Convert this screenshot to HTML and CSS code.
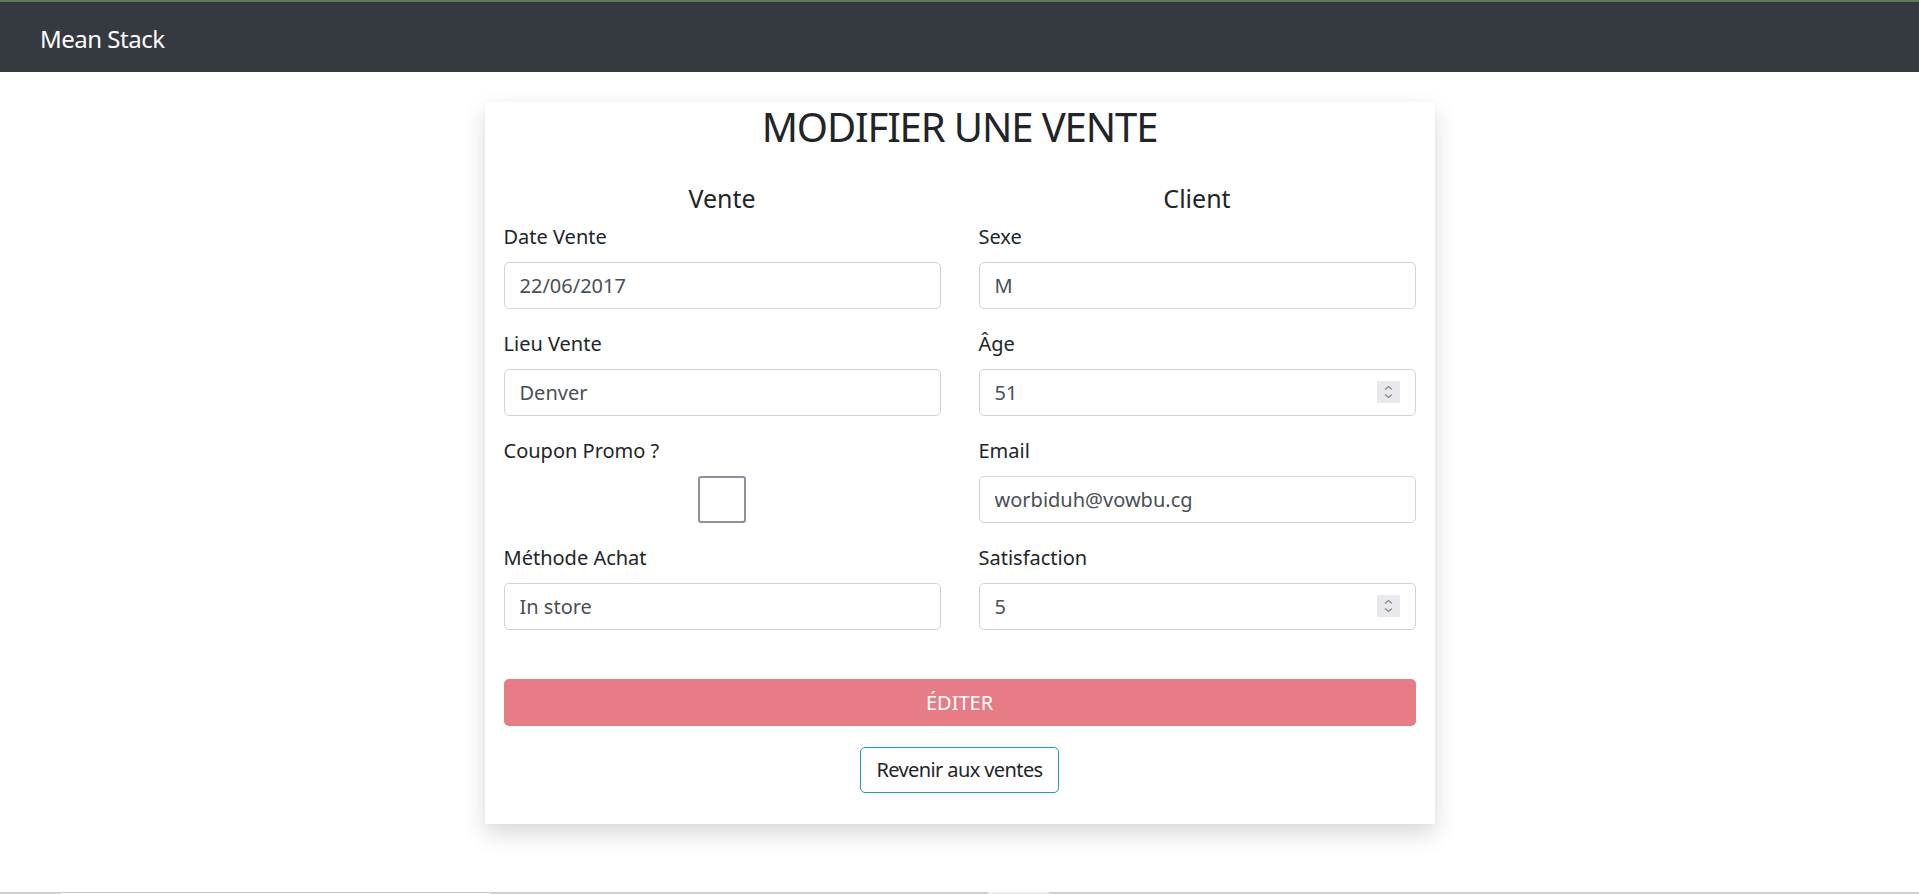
FILE: index.html
```html
<!DOCTYPE html>
<html lang="fr">
<head>
<meta charset="utf-8">
<title>Mean Stack</title>
<link rel="stylesheet" href="styles.css">
</head>
<body>
<div class="page">
  <nav class="navbar">
    <a class="brand" href="#">Mean Stack</a>
  </nav>
  <main class="main">
    <div class="card">
      <h1 class="title">MODIFIER UNE VENTE</h1>
      <div class="cols">
        <div class="col">
          <h5 class="col-title">Vente</h5>
          <div class="group">
            <label class="label">Date Vente</label>
            <input class="control" type="text" value="22/06/2017">
          </div>
          <div class="group">
            <label class="label">Lieu Vente</label>
            <input class="control" type="text" value="Denver">
          </div>
          <div class="group">
            <label class="label">Coupon Promo ?</label>
            <div class="check-wrap"><input class="check" type="checkbox"></div>
          </div>
          <div class="group">
            <label class="label">Méthode Achat</label>
            <input class="control" type="text" value="In store">
          </div>
        </div>
        <div class="col">
          <h5 class="col-title">Client</h5>
          <div class="group">
            <label class="label">Sexe</label>
            <input class="control" type="text" value="M">
          </div>
          <div class="group">
            <label class="label">Âge</label>
            <div class="num">
              <input class="control" type="text" value="51">
              <span class="spin"><svg width="23" height="22" viewBox="0 0 23 22"><path d="M8 8.5 L11.5 5.5 L15 8.5" fill="none" stroke="#8a8a92" stroke-width="1.3"/><path d="M8 13.5 L11.5 16.5 L15 13.5" fill="none" stroke="#8a8a92" stroke-width="1.3"/></svg></span>
            </div>
          </div>
          <div class="group">
            <label class="label">Email</label>
            <input class="control" type="text" value="worbiduh@vowbu.cg">
          </div>
          <div class="group">
            <label class="label">Satisfaction</label>
            <div class="num">
              <input class="control" type="text" value="5">
              <span class="spin"><svg width="23" height="22" viewBox="0 0 23 22"><path d="M8 8.5 L11.5 5.5 L15 8.5" fill="none" stroke="#8a8a92" stroke-width="1.3"/><path d="M8 13.5 L11.5 16.5 L15 13.5" fill="none" stroke="#8a8a92" stroke-width="1.3"/></svg></span>
            </div>
          </div>
        </div>
      </div>
      <button class="btn-edit" type="button">ÉDITER</button>
      <div class="back-row"><a class="btn-back" href="#">Revenir aux ventes</a></div>
    </div>
  </main>
  <div class="bottom-strip"><span class="seg-a"></span><span class="seg-b"></span><span class="seg-c"></span><span class="seg-d"></span></div>
</div>
</body>
</html>
```
FILE: styles.css
```css
html, body {
  margin: 0;
  padding: 0;
}
body {
  font-family: "Noto Sans", "Open Sans", sans-serif;
  font-size: 20px;
  line-height: 1.5;
  color: #212529;
  background: #fff;
}
.page {
  min-height: 100vh;
  display: flex;
  flex-direction: column;
}
.navbar {
  height: 70px;
  border-top: 2px solid #5d7b5e;
  background: #343a40;
  display: flex;
  align-items: center;
  padding: 0 40px;
}
.brand {
  color: #fff;
  text-decoration: none;
  font-size: 24px;
  letter-spacing: -0.5px;
  line-height: 37px;
  margin-top: 2px;
}
.main {
  padding-top: 30px;
}
.card {
  width: 950px;
  box-sizing: border-box;
  margin: 0 auto;
  padding: 0 19px 31px;
  background: #fff;
  box-shadow: 0 10px 22px rgba(0, 0, 0, 0.15), 0 0 4px rgba(0, 0, 0, 0.03);
}
.title {
  margin: 0 0 32px;
  padding-top: 1px;
  font-size: 40px;
  letter-spacing: -1.1px;
  line-height: 48px;
  font-weight: 400;
  text-align: center;
}
.cols {
  display: grid;
  grid-template-columns: 1fr 1fr;
  column-gap: 38px;
}
.col-title {
  margin: 0 0 9px;
  font-size: 25px;
  line-height: 30px;
  font-weight: 400;
  text-align: center;
}
.group {
  margin-bottom: 20px;
  display: flex;
  flex-direction: column;
}
.label {
  display: block;
  line-height: 30px;
  margin-bottom: 10px;
}
.control {
  display: block;
  width: 100%;
  box-sizing: border-box;
  height: 47px;
  padding: 0 15px;
  font-family: inherit;
  font-size: 20px;
  color: #495057;
  background: #fff;
  border: 1px solid #ced4da;
  border-radius: 5px;
  outline: none;
}
.check-wrap {
  display: flex;
  justify-content: center;
  height: 47px;
}
.check {
  appearance: none;
  -webkit-appearance: none;
  margin: 0;
  width: 48px;
  height: 47px;
  box-sizing: border-box;
  border: 2px solid #8f8f9d;
  border-radius: 3px;
  background: #fff;
}
.num {
  position: relative;
}
.spin {
  position: absolute;
  right: 16px;
  top: 12px;
  width: 23px;
  height: 22px;
  background: #e9e9ed;
  display: block;
}
.spin svg {
  display: block;
}
.btn-edit {
  display: block;
  width: 100%;
  height: 47px;
  margin-top: 29px;
  border: none;
  border-radius: 5px;
  background: #e77c86;
  color: #fff;
  font-family: inherit;
  font-size: 20px;
  padding: 0;
}
.back-row {
  display: flex;
  justify-content: center;
  margin-top: 21px;
}
.btn-back {
  display: flex;
  align-items: center;
  height: 46px;
  box-sizing: border-box;
  padding: 0 15px;
  border: 1px solid #17a2b8;
  border-radius: 5px;
  color: #212529;
  text-decoration: none;
  font-size: 20px;
  letter-spacing: -0.6px;
}
.bottom-strip {
  margin-top: auto;
  height: 2px;
  display: flex;
  background: #d0d0d0;
}
.bottom-strip span {
  display: block;
  height: 2px;
}
.seg-a { width: 61px; background: #cfcfcf; }
.seg-b { width: 429px; background: linear-gradient(#c9c9c9 50%, #fff 50%); }
.seg-c { width: 498px; background: #d0d0d0; }
.seg-d { width: 61px; background: #ededed; }
```
